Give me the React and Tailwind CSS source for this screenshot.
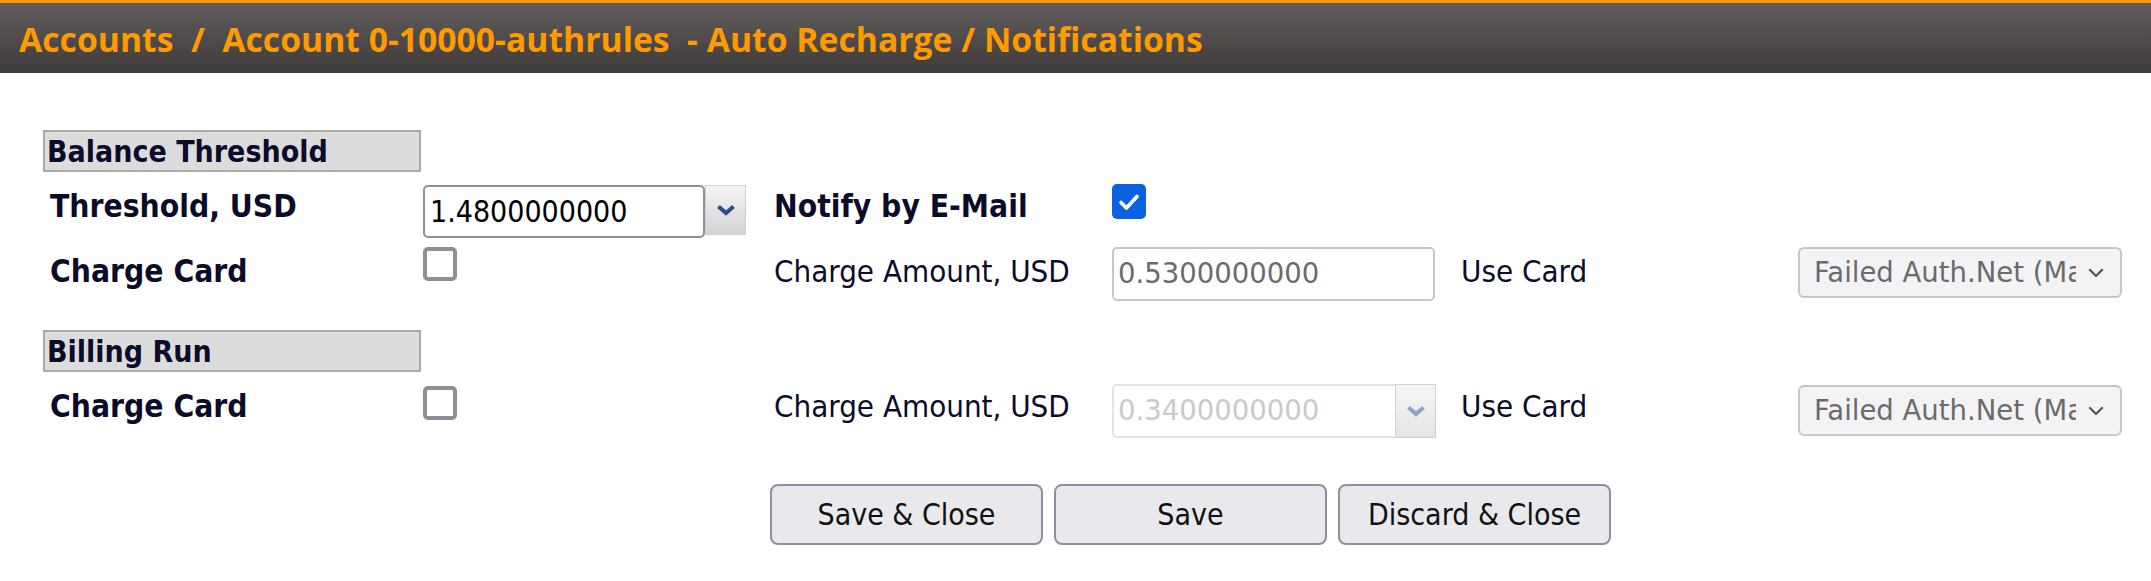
import React from "react";

/* ===============================
   SMALL PIECES
=============================== */
const font =
  "font-['DejaVu_Sans_Condensed','DejaVu_Sans',sans-serif] font-stretch-condensed";

const label = font + " leading-[35px] text-[#0c0c2a] whitespace-nowrap";
const bold = label + " font-bold text-[31.5px]";
const plain = label + " text-[31px]";

function SectionHead({ children }) {
  return (
    <div className="w-[378px] h-[42px] border-2 border-[#a9a9a9] bg-[#dcdcdc] flex items-center pl-[2px]">
      <span className={label + " font-bold text-[30px]"}>{children}</span>
    </div>
  );
}

function Checkbox({ checked, className = "" }) {
  if (checked) {
    return (
      <div
        className={
          "w-[34px] h-[35px] rounded-[5px] bg-[#0b62e0] flex items-center justify-center " +
          className
        }
      >
        <svg width="22" height="18" viewBox="0 0 22 18" fill="none">
          <path
            d="M3 9.5 L8.5 15 L19 3.5"
            stroke="white"
            strokeWidth="3.6"
            strokeLinecap="round"
            strokeLinejoin="round"
          />
        </svg>
      </div>
    );
  }
  return (
    <div
      className={
        "w-[34px] h-[34px] rounded-[5px] border-4 border-[#8e8d98] bg-white " +
        className
      }
    />
  );
}

function Spinner({ disabled }) {
  return (
    <div
      className={
        "w-[41px] flex items-center justify-center border border-[#d0d0d0] " +
        (disabled
          ? "h-[54px] bg-gradient-to-b from-[#f6f6f6] to-[#e4e4e4]"
          : "h-[50px] bg-gradient-to-b from-[#f5f5f5] to-[#d3d3d3]")
      }
    >
      <svg width="20" height="12" viewBox="0 0 20 12">
        <path
          d="M2.5 2.5 L10 9 L17.5 2.5"
          stroke={disabled ? "#8ea2c4" : "#2d4d86"}
          strokeWidth="4"
          fill="none"
          strokeLinejoin="miter"
        />
      </svg>
    </div>
  );
}

function Select({ className = "" }) {
  return (
    <div
      className={
        "w-[324px] h-[51px] rounded-[6px] border-2 border-[#c6c6cb] bg-[#f3f3f5] flex items-center pl-[14px] pr-[16px] " +
        className
      }
    >
      <div className="flex-1 overflow-hidden whitespace-nowrap font-['DejaVu_Sans',sans-serif] text-[27.5px] text-[#6b6b6b]">
        Failed Auth.Net (Mastercard)
      </div>
      <svg width="16" height="10" viewBox="0 0 16 10" className="ml-[12px]">
        <path
          d="M2 2 L8 8 L14 2"
          stroke="#5a5a5a"
          strokeWidth="2.4"
          fill="none"
          strokeLinecap="round"
          strokeLinejoin="round"
        />
      </svg>
    </div>
  );
}

function Button({ children }) {
  return (
    <button
      className={
        font +
        " w-[273px] h-[61px] rounded-[8px] border-2 border-[#8f8f9d] bg-[#e9e9ed] text-[30px] text-[#111]"
      }
    >
      {children}
    </button>
  );
}

const grid =
  "grid grid-cols-[380px_351px_338px_349px_337px_324px] items-start";

export default function App() {
  return (
    <div className="w-[2151px] h-[581px] bg-white overflow-hidden">
      {/* HEADER */}
      <div className="h-[73px] border-t-[3px] border-[#ff9900] bg-gradient-to-b from-[#625d5d] to-[#3f3b3b] flex items-center pl-[19px] pt-[2px]">
        <h1 className="font-['Open_Sans',sans-serif] font-bold text-[33.7px] text-[#ff9a00] whitespace-pre">
          {"Accounts  /  Account 0-10000-authrules  - Auto Recharge / Notifications"}
        </h1>
      </div>

      <div className="pl-[43px] pt-[57px]">
        {/* BALANCE THRESHOLD */}
        <SectionHead>Balance Threshold</SectionHead>

        <div className={grid + " mt-[9px]"}>
          <div className={bold + " pl-[7px] mt-[8px]"}>Threshold, USD</div>
          <div className="mt-[4px] flex items-start">
            <div className="w-[282px] h-[53px] rounded-[5px] border-2 border-[#8f8e99] bg-white flex items-center pl-[5px]">
              <span className={font + " text-[30px] text-black"}>
                1.4800000000
              </span>
            </div>
            <Spinner />
          </div>
          <div className={bold + " mt-[8px]"}>Notify by E-Mail</div>
          <Checkbox checked className="mt-[3px]" />
          <div />
          <div />
        </div>

        <div className={grid + " mt-[9px]"}>
          <div className={bold + " pl-[7px] mt-[7px]"}>Charge Card</div>
          <Checkbox />
          <div className={plain + " mt-[7px]"}>Charge Amount, USD</div>
          <div className="w-[323px] h-[54px] rounded-[5px] border-2 border-[#c6c6ca] bg-white flex items-center pl-[4px]">
            <span className="font-['DejaVu_Sans',sans-serif] text-[27.5px] text-[#6b6b6b]">
              0.5300000000
            </span>
          </div>
          <div className={plain + " mt-[7px]"}>Use Card</div>
          <Select />
        </div>

        {/* BILLING RUN */}
        <div className="mt-[29px]">
          <SectionHead>Billing Run</SectionHead>
        </div>

        <div className={grid + " mt-[12px]"}>
          <div className={bold + " pl-[7px] mt-[5px]"}>Charge Card</div>
          <Checkbox className="mt-[2px]" />
          <div className={plain + " mt-[5px]"}>Charge Amount, USD</div>
          <div className="flex items-start">
            <div className="w-[283px] h-[54px] rounded-l-[5px] border-2 border-r-0 border-[#e3e3e6] bg-white flex items-center pl-[4px]">
              <span className="font-['DejaVu_Sans',sans-serif] text-[27.5px] text-[#c9c9c9]">
                0.3400000000
              </span>
            </div>
            <Spinner disabled />
          </div>
          <div className={plain + " mt-[5px]"}>Use Card</div>
          <Select className="mt-[1px]" />
        </div>

        {/* ACTIONS */}
        <div className="flex gap-[11px] mt-[46px] pl-[727px]">
          <Button>Save &amp; Close</Button>
          <Button>Save</Button>
          <Button>Discard &amp; Close</Button>
        </div>
      </div>
    </div>
  );
}
